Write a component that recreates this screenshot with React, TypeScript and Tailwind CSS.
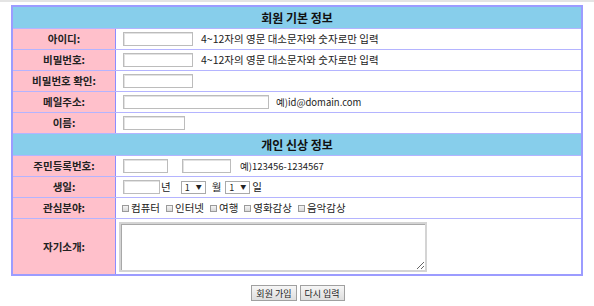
import React from 'react';

const font = "font-['Noto_Sans_CJK_KR','Noto_Sans',sans-serif]";

function Label({ children }: { children: React.ReactNode }) {
  return (
    <div className="w-[103px] shrink-0 bg-[#ffc0cb] border-r border-[#8c8cff] flex items-center justify-center font-bold text-[10.5px] text-[#222]">
      {children}
    </div>
  );
}

function Row({ label, children }: { label: string; children?: React.ReactNode }) {
  return (
    <div className="flex h-[21px] border-b border-[#b4b4ff]">
      <Label>{label}</Label>
      <div className="flex-1 flex items-center pl-[7px] text-[10.5px] text-[#222] bg-white">{children}</div>
    </div>
  );
}

function Input({ w }: { w: string }) {
  return (
    <span className={`${w} h-[14px] inline-block bg-white border border-[#bcbcbc] shadow-[inset_1px_1px_0_#e2e2e2]`} />
  );
}

function Select() {
  return (
    <span className="w-[25px] h-[13px] inline-flex items-center justify-between px-[3px] border border-[#a9a9a9] bg-white text-[9px] leading-none">
      <span>1</span>
      <span className="text-[6px]">▼</span>
    </span>
  );
}

function Check({ label }: { label: string }) {
  return (
    <span className="inline-flex items-center mr-[6px]">
      <span className="w-[7px] h-[7px] inline-block border border-[#9a9a9a] bg-gradient-to-b from-[#f4f4f4] to-[#d8d8d8] mr-[2px]" />
      {label}
    </span>
  );
}

function Section({ title }: { title: string }) {
  return (
    <div className="h-[22px] bg-[#87ceeb] border-b border-[#b4b4ff] flex items-center justify-center font-bold text-[12px] text-[#111]">
      {title}
    </div>
  );
}

export default function App() {
  return (
    <div className={`w-[594px] h-[306px] bg-white ${font}`}>
      <div className="h-[2px] bg-[#e4e4e4]" />
      <div className="ml-[11px] mt-[3px] w-[572px] border-2 border-[#9c9cff]">
        <Section title="회원 기본 정보" />
        <Row label="아이디:">
          <Input w="w-[70px]" />
          <span className="ml-[8px]">4~12자의 영문 대소문자와 숫자로만 입력</span>
        </Row>
        <Row label="비밀번호:">
          <Input w="w-[70px]" />
          <span className="ml-[8px]">4~12자의 영문 대소문자와 숫자로만 입력</span>
        </Row>
        <Row label="비밀번호 확인:">
          <Input w="w-[70px]" />
        </Row>
        <Row label="메일주소:">
          <Input w="w-[146px]" />
          <span className="ml-[7px] text-[9.5px]">예)id@domain.com</span>
        </Row>
        <Row label="이름:">
          <Input w="w-[62px]" />
        </Row>
        <Section title="개인 신상 정보" />
        <Row label="주민등록번호:">
          <Input w="w-[45px]" />
          <span className="ml-[14px]" />
          <Input w="w-[49px]" />
          <span className="ml-[9px] text-[9.5px]">예)123456-1234567</span>
        </Row>
        <Row label="생일:">
          <Input w="w-[37px]" />
          <span className="ml-[1px] mr-[10px]">년</span>
          <Select />
          <span className="ml-[6px] mr-[4px]">월</span>
          <Select />
          <span className="ml-[2px]">일</span>
        </Row>
        <Row label="관심분야:">
          <span className="-ml-[1px] inline-flex">
            <Check label="컴퓨터" />
            <Check label="인터넷" />
            <Check label="여행" />
            <Check label="영화감상" />
            <Check label="음악감상" />
          </span>
        </Row>
        <div className="flex h-[55px]">
          <Label>자기소개:</Label>
          <div className="flex-1 flex items-center pl-[3px] bg-white">
            <textarea className="w-[308px] h-[50px] border-2 border-[#d4d4d4] shadow-[inset_1px_1px_0_#a8a8a8] resize" />
          </div>
        </div>
      </div>
      <div className="mt-[9px] flex justify-center gap-[3px] pl-[2px]">
        <button className="h-[16px] px-[4px] text-[9px] leading-none border border-[#a0a0a0] bg-gradient-to-b from-[#f6f6f6] to-[#dedede] text-[#222]">
          회원 가입
        </button>
        <button className="h-[16px] px-[4px] text-[9px] leading-none border border-[#a0a0a0] bg-gradient-to-b from-[#f6f6f6] to-[#dedede] text-[#222]">
          다시 입력
        </button>
      </div>
    </div>
  );
}
